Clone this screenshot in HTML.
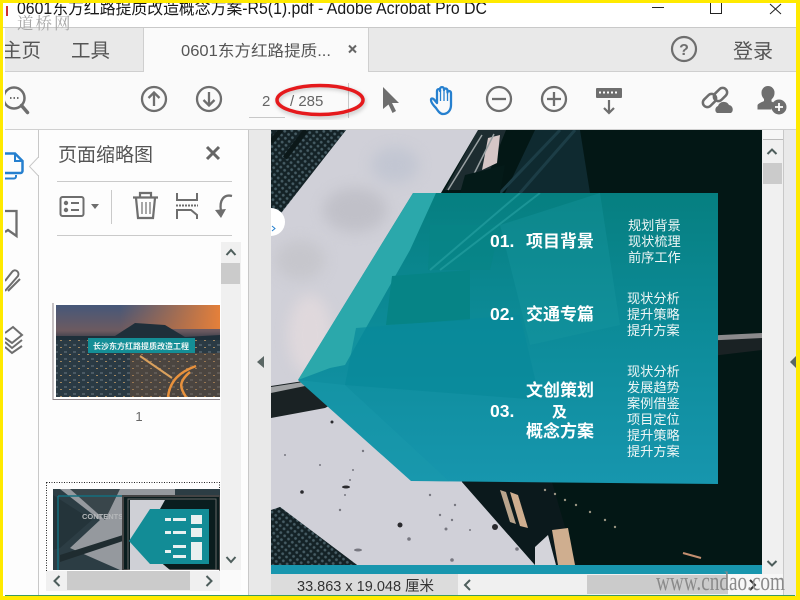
<!DOCTYPE html>
<html><head><meta charset="utf-8"><style>
html,body{margin:0;padding:0;background:#fff;width:800px;height:600px;overflow:hidden}
svg{display:block}
text{font-family:"Liberation Sans","Noto Sans CJK SC",sans-serif}
</style></head><body>
<svg width="800" height="600" viewBox="0 0 800 600" xmlns="http://www.w3.org/2000/svg">
<defs>
<linearGradient id="teal" x1="0" y1="0" x2="0" y2="1"><stop offset="0" stop-color="#067f80"/><stop offset=".5" stop-color="#0d8c9a"/><stop offset="1" stop-color="#1796ae"/></linearGradient>
<linearGradient id="sky" x1="0" y1="0" x2="0" y2="1"><stop offset="0" stop-color="#46587a"/><stop offset=".28" stop-color="#6d5a60"/><stop offset=".4" stop-color="#243240"/><stop offset="1" stop-color="#1b2d3c"/></linearGradient>
<linearGradient id="sun" x1="0" y1="0" x2="1" y2="0"><stop offset="0" stop-color="#d8793f" stop-opacity="0"/><stop offset="1" stop-color="#e5803a"/></linearGradient>
<pattern id="mesh" width="5" height="5" patternUnits="userSpaceOnUse" patternTransform="rotate(40)"><rect width="5" height="5" fill="#142226"/><circle cx="2.500" cy="2.500" r="1.400" fill="#465c64"/></pattern>
<pattern id="city" width="9" height="7" patternUnits="userSpaceOnUse"><rect width="9" height="7" fill="#2a3a44"/><rect x="1" y="1" width="3" height="2" fill="#4b5a64"/><rect x="6" y="4" width="2" height="1" fill="#a08660"/></pattern>
<filter id="b4" color-interpolation-filters="sRGB"><feGaussianBlur stdDeviation="7"/></filter>
<filter id="b2" color-interpolation-filters="sRGB"><feGaussianBlur stdDeviation="2"/></filter>
<clipPath id="doc"><rect x="271" y="130" width="491" height="435"/></clipPath>
<clipPath id="th1"><rect x="56" y="305" width="164" height="92"/></clipPath>
<clipPath id="th2"><rect x="53" y="489" width="167" height="81"/></clipPath>
<clipPath id="tealc"><polygon points="413,193 718,193 718,484 411,481 298,380"/></clipPath>
</defs>

<rect width="800" height="600" fill="#fff"/>
<!-- title bar -->
<rect x="3" y="27" width="793" height="1" fill="#c9c9c9"/>
<rect x="6" y="6" width="2" height="10" fill="#c33"/>
<text x="17" y="14" font-size="17.500" fill="#1a1a1a" textLength="470" lengthAdjust="spacingAndGlyphs">0601东方红路提质改造概念方案-R5(1).pdf - Adobe Acrobat Pro DC</text>
<rect x="652" y="7" width="12" height="1" fill="#222"/>
<path d="M710.500 3V13.500H721.500V3" fill="none" stroke="#222"/>
<path d="M770 4L781 14M781 4L770 14" stroke="#222" fill="none"/>

<!-- tab bar -->
<rect x="3" y="28" width="793" height="44" fill="#e9e9e9"/>
<rect x="143" y="28" width="226" height="44" fill="#fafafa"/>
<path d="M143.500 28V72M368.500 28V72" stroke="#cfcfcf"/>
<rect x="3" y="71" width="140" height="1" fill="#cfcfcf"/><rect x="369" y="71" width="427" height="1" fill="#cfcfcf"/>
<text x="2" y="57" font-size="19.500" fill="#555">主页</text>
<text x="71" y="57" font-size="19.500" fill="#555">工具</text>
<text x="181" y="56" font-size="15.500" fill="#555" textLength="150" lengthAdjust="spacingAndGlyphs">0601东方红路提质...</text>
<path d="M349 45.500L356 52.500M356 45.500L349 52.500" stroke="#666" stroke-width="2"/>
<circle cx="684" cy="49" r="12" fill="none" stroke="#6e6e6e" stroke-width="2.200"/>
<text x="684" y="55" font-size="16" font-weight="bold" fill="#6e6e6e" text-anchor="middle">?</text>
<text x="733" y="58" font-size="20" fill="#555">登录</text>

<!-- toolbar -->
<rect x="3" y="72" width="793" height="57" fill="#fafafa"/>
<rect x="3" y="129" width="793" height="1" fill="#d0d0d0"/>
<circle cx="14" cy="98" r="10.500" fill="none" stroke="#6e6e6e" stroke-width="2.500"/>
<path d="M21.500 105.500L27.500 112.500" stroke="#6e6e6e" stroke-width="3.500" stroke-linecap="round"/>
<path d="M10 98h1.500M13.500 98h1.500M17 98h1.500" stroke="#6e6e6e" stroke-width="2"/>
<g fill="none" stroke="#6e6e6e" stroke-width="2.300">
<circle cx="154" cy="99" r="12"/><path d="M154 106V92.500M148.500 98L154 92.500L159.500 98"/>
<circle cx="209" cy="99" r="12"/><path d="M209 92V105.500M203.500 100L209 105.500L214.500 100"/>
<circle cx="499" cy="99" r="12"/><path d="M492 99H506"/>
<circle cx="554" cy="99" r="12"/><path d="M547 99H561M554 92V106"/>
</g>
<text x="262" y="106" font-size="15" fill="#666">2</text>
<text x="290" y="106" font-size="15" fill="#666">/ 285</text>
<rect x="249" y="117" width="36" height="1" fill="#c8c8c8"/>
<rect x="348" y="83" width="1" height="35" fill="#c8c8c8"/>
<ellipse cx="321" cy="102" rx="43" ry="15" fill="none" stroke="#777" stroke-width="3" opacity=".5" filter="url(#b2)"/>
<ellipse cx="320" cy="100" rx="43" ry="14.500" fill="none" stroke="#e5191c" stroke-width="3.500"/>
<path d="M383 87V109L388.500 104.500L392.500 113L396 111L392 103H399Z" fill="#6e6e6e"/>
<path d="M436 108C433 105 431 102 431 100C431 98 433 98 434.500 100L437 103V91C437 88.500 440 88.500 440 91V89C440 86.500 444 86.500 444 89V90C444 88 447.500 88 447.500 90.500V92.500C447.500 90.500 451 90.500 451 93V105C451 110 448 114 443 114C440 114 438 111 436 108Z" fill="none" stroke="#2680cf" stroke-width="2.300" stroke-linejoin="round"/>
<path d="M440.500 90V101M444 90V101M447.500 91V101" stroke="#2680cf" stroke-width="1.300"/>
<rect x="596" y="88" width="26" height="10" rx="1" fill="#6e6e6e"/>
<path d="M599 92.500h20" stroke="#fff" stroke-width="2" stroke-dasharray="2 2"/>
<path d="M609 100V113M604 108L609 113L614 108" fill="none" stroke="#6e6e6e" stroke-width="2.200"/>
<g fill="none" stroke="#6e6e6e" stroke-width="2.500">
<rect x="702" y="96" width="15" height="9" rx="4.500" transform="rotate(-45 709.500 100.500)"/>
<rect x="713" y="90" width="15" height="9" rx="4.500" transform="rotate(-45 720.500 94.500)"/>
</g>
<path d="M717 113a4 4 0 0 1 1-7a6 6 0 0 1 11-1a4.500 4.500 0 0 1 2 8Z" fill="#6e6e6e"/>
<path d="M768 86a6.500 6.500 0 0 1 6.500 7c0 3-1.500 5-3 6.500v2c1 .5 2 1 3 1.500c-2 2-3 4-3 6.500h-14v-4c0-2 5-3.500 6.500-4.500v-2c-1.500-1.500-2.500-3.500-2.500-6a6.500 6.500 0 0 1 6.500-7Z" fill="#6e6e6e"/>
<circle cx="779" cy="107" r="7.500" fill="#6e6e6e"/>
<path d="M775 107h8M779 103v8" stroke="#fff" stroke-width="1.800"/>

<!-- left rail and panel -->
<rect x="3" y="130" width="35" height="466" fill="#fdfdfd"/>
<rect x="38" y="130" width="1" height="466" fill="#c8c8c8"/>
<rect x="39" y="130" width="209" height="466" fill="#fdfdfd"/>
<rect x="248" y="130" width="1" height="466" fill="#c8c8c8"/>
<rect x="249" y="130" width="22" height="466" fill="#e9e9e9"/>
<path d="M38.500 157L29.500 166.500L38.500 176" fill="#fdfdfd" stroke="#c8c8c8"/>
<rect x="38" y="158" width="2" height="17" fill="#fdfdfd"/>
<path d="M5 153.500H15L22.500 161V171a2 2 0 0 1-2 2H5" fill="none" stroke="#2680cf" stroke-width="2.500"/>
<path d="M15 153.500V161H22.500" fill="none" stroke="#2680cf" stroke-width="2"/>
<path d="M5 178.500H14a2 2 0 0 0 2-2V175" fill="none" stroke="#2680cf" stroke-width="2"/>
<path d="M5 211H16.500V236L8 230L5 232" fill="none" stroke="#6e6e6e" stroke-width="2.300"/>
<path d="M5 291L18 276C20 272 15 268 12 272L5 281M8 291L20 279" fill="none" stroke="#6e6e6e" stroke-width="2"/>
<path d="M5 333L13 327L22 335L12 343L5 338M5 342L12 348L22 340M5 347L12 353L22 346" fill="none" stroke="#6e6e6e" stroke-width="2"/>
<text x="58" y="161" font-size="19" fill="#555">页面缩略图</text>
<path d="M207 147L219 159M219 147L207 159" stroke="#666" stroke-width="3"/>
<rect x="57" y="181" width="175" height="1" fill="#cacaca"/>
<rect x="57" y="235" width="175" height="1" fill="#cacaca"/>
<rect x="111" y="190" width="1" height="34" fill="#cacaca"/>
<rect x="60.500" y="197" width="23" height="19" rx="2" fill="none" stroke="#6e6e6e" stroke-width="2"/>
<circle cx="66" cy="203" r="2.200" fill="#6e6e6e"/><circle cx="66" cy="210" r="2.200" fill="#6e6e6e"/>
<path d="M71 203h8M71 210h8" stroke="#6e6e6e" stroke-width="2"/>
<path d="M91 204H99L95 209Z" fill="#6e6e6e"/>
<path d="M133 197.500H158M140 197V193H151V197M136 198L138 218H153L155 198" fill="none" stroke="#6e6e6e" stroke-width="2.200"/>
<path d="M142 202V214M146 202V214M150 202V214" stroke="#6e6e6e" stroke-width="1.200"/>
<path d="M177 193V200H197V193M177 219V210H191L197 215V219" fill="none" stroke="#6e6e6e" stroke-width="2"/>
<path d="M176 205.500h22" stroke="#6e6e6e" stroke-width="2" stroke-dasharray="2 1"/>
<path d="M232 196C224 194 219 200 221 211" fill="none" stroke="#6e6e6e" stroke-width="2.300"/>
<path d="M215 210L226 209L221 218Z" fill="#6e6e6e"/>

<!-- thumb scrollbars -->
<rect x="221" y="242" width="20" height="328" fill="#f0f0f0"/>
<rect x="221" y="263" width="19" height="21" fill="#cbcbcb"/>
<path d="M226.500 255L231 250L235.500 255" fill="none" stroke="#4e5e5c" stroke-width="2"/>
<path d="M226.500 557L231 562L235.500 557" fill="none" stroke="#4e5e5c" stroke-width="2"/>

<!-- thumb 1 -->
<rect x="53" y="303" width="168" height="97" fill="#fff"/>
<path d="M53 303V399.500H220" fill="none" stroke="#8d8589"/>
<g clip-path="url(#th1)">
<rect x="56" y="305" width="164" height="92" fill="url(#sky)"/>
<rect x="120" y="305" width="100" height="24" fill="url(#sun)"/>
<path d="M56 336L115 336L135 323L165 325L185 337L220 335V397H56Z" fill="#1f2f3a"/>
<rect x="56" y="340" width="164" height="57" fill="url(#city)"/>
<rect x="130" y="353" width="90" height="44" fill="#8a5c3a" opacity=".35"/>
<path d="M196 366C180 372 170 380 168 397M186 397C180 388 178 382 190 372" fill="none" stroke="#e8913c" stroke-width="2.500"/>
<path d="M140 356L172 378" stroke="#d9a05c" stroke-width="2"/>
<rect x="88" y="338" width="107" height="15" fill="#148e96"/>
<text x="93" y="349" font-size="8" font-weight="bold" fill="#eaf4f4">长沙东方红路提质改造工程</text>
</g>
<text x="139" y="421" font-size="13" fill="#666" text-anchor="middle">1</text>

<!-- thumb 2 -->
<rect x="46.500" y="482.500" width="173" height="100" fill="none" stroke="#222" stroke-dasharray="1 1.500"/>
<g clip-path="url(#th2)">
<rect x="53" y="489" width="167" height="81" fill="#2c3d44"/>
<polygon points="60,489 100,520 70,548 120,570 175,570 175,489" fill="#95999e"/>
<polygon points="70,489 120,489 105,520" fill="#39464b"/>
<polygon points="53,495 92,520 60,548 53,550" fill="#24343a"/>
<polygon points="60,555 123,535 123,541 60,562" fill="#1f2c30"/>
<path d="M58 496H220M58 496V570" fill="none" stroke="#146f7e" stroke-width="1.500"/>
<text x="82" y="519" font-size="7.500" font-weight="bold" fill="#b5b8ba">CONTENTS</text>
<rect x="123" y="496" width="97" height="74" fill="#0a1d1e" stroke="#444" stroke-width="2"/>
<rect x="128" y="499" width="88" height="71" fill="none" stroke="#666"/>
<polygon points="130,500 165,500 140,545 170,570 130,570" fill="#cfd0d6"/>
<polygon points="150,509 209,509 209,564 150,564 129,541" fill="#128c96"/>
<g fill="#e8f0f0"><rect x="165" y="518" width="6" height="3"/><rect x="173" y="518" width="13" height="3"/><rect x="191" y="515" width="11" height="9"/><rect x="165" y="531" width="6" height="3"/><rect x="173" y="531" width="13" height="3"/><rect x="191" y="528" width="11" height="9"/><rect x="165" y="550" width="6" height="3"/><rect x="173" y="545" width="13" height="3"/><rect x="173" y="555" width="13" height="3"/><rect x="191" y="542" width="11" height="18"/></g>
</g>
<rect x="46" y="571" width="174" height="20" fill="#f0f0f0"/>
<rect x="67" y="571" width="123" height="19" fill="#cbcbcb"/>
<path d="M59.500 576L54.500 581L59.500 586" fill="none" stroke="#4e5e5c" stroke-width="2"/>
<path d="M206.500 576L211.500 581L206.500 586" fill="none" stroke="#4e5e5c" stroke-width="2"/>
<rect x="220" y="570" width="21" height="21" fill="#fafafa"/>

<!-- document -->
<g clip-path="url(#doc)">
<rect x="271" y="130" width="491" height="435" fill="#031715"/>
<polygon points="535,130 580,130 590,193 505,193" fill="#0f2a30"/>
<path d="M560 130L500 193M575 130L520 193" stroke="#1c3d46" stroke-width="3"/>
<polygon points="478,130 506,130 482,190 445,190" fill="#1d2c30"/>
<polygon points="488,138 500,135 497,163 482,170" fill="#d5c6c6"/>
<path d="M482 135L448 190M494 134L466 190" stroke="#99a0a2" stroke-width="1.500"/>
<polygon points="465,175 505,165 500,193 460,193" fill="#041a18"/>
<!-- concrete -->
<polygon points="346,130 478,130 378,300 462,482 535,565 357,565 280,507 271,512 271,225" fill="#d0d0d8"/>
<g filter="url(#b4)"><ellipse cx="355" cy="210" rx="32" ry="22" fill="#c0c0c8"/><ellipse cx="395" cy="165" rx="24" ry="18" fill="#c2c6d2"/><ellipse cx="310" cy="335" rx="22" ry="40" fill="#dfd8dc"/><ellipse cx="300" cy="260" rx="25" ry="20" fill="#c6c6cc"/></g>
<polygon points="271,130 346,130 271,226" fill="url(#mesh)"/>
<path d="M271 142L281 130M285 158L306 130" stroke="#0c1819" stroke-width="5"/>
<polygon points="271,510 280,507 357,565 271,565" fill="url(#mesh)"/>
<!-- beam -->
<polygon points="271,386 310,380 762,336 762,350 340,400 325,408 271,418" fill="#1a2224"/>
<polygon points="271,387 310,381 310,385 271,393" fill="#a0a2a4"/>
<polygon points="660,338 762,333 762,338 660,343" fill="#8b8a8c"/>
<!-- bottom-right building -->
<polygon points="462,482 552,482 576,565 535,565" fill="#0b191c"/>
<polygon points="500,490 506,492 516,524 510,522" fill="#b9a48c"/>
<polygon points="510,492 518,495 528,528 520,526" fill="#cfae8f"/>
<polygon points="552,530 568,528 575,565 558,565" fill="#cfae8f"/>
<polygon points="535,547 548,535 556,565 535,565" fill="#d4d4da"/>
<g fill="#d8c8b0" opacity=".7"><circle cx="545" cy="490" r="1.200"/><circle cx="555" cy="494" r="1.200"/><circle cx="565" cy="500" r="1.200"/><circle cx="576" cy="505" r="1.200"/><circle cx="590" cy="512" r="1.200"/><circle cx="605" cy="520" r="1.200"/><circle cx="615" cy="527" r="1.200"/></g>
<path d="M683 553L701 558" stroke="#c48f70" stroke-width="2"/>
<!-- specks -->
<g fill="#2a2a2e"><circle cx="400" cy="525" r="2.500"/><circle cx="495" cy="527" r="3"/><ellipse cx="346" cy="487" rx="4" ry="1.500"/><circle cx="302" cy="492" r="1.800"/><circle cx="332" cy="422" r="1.500"/></g>
<g fill="#777780"><circle cx="409" cy="539" r="1.800"/><circle cx="446" cy="529" r="1.500"/><circle cx="517" cy="549" r="1.800"/><circle cx="452" cy="560" r="1.800"/><circle cx="340" cy="510" r="1.200"/><circle cx="363" cy="451" r="1.200"/><circle cx="353" cy="470" r="1"/><circle cx="430" cy="495" r="1.200"/><circle cx="455" cy="505" r="1.200"/><circle cx="440" cy="515" r="1.200"/><circle cx="320" cy="465" r="1"/><circle cx="285" cy="455" r="1"/><ellipse cx="358" cy="550" rx="4" ry="1.500"/><circle cx="350" cy="480" r="1"/><circle cx="345" cy="495" r="1"/><circle cx="452" cy="520" r="1.200"/><circle cx="470" cy="530" r="1"/></g>
<!-- teal panel -->
<polygon points="413,193 718,193 718,484 411,481 298,380" fill="url(#teal)"/>
<g clip-path="url(#tealc)">
<polygon points="413,193 436,193 410,250 345,365 330,368 298,380" fill="#2ba8ab"/>
<polygon points="298,380 410,480 450,482 345,385" fill="#1b9cad" opacity=".4"/>
<polygon points="430,225 500,225 490,270 428,270" fill="#078586" opacity=".7"/>
<polygon points="392,276 470,270 470,320 386,325" fill="#068486"/>
<polygon points="356,328 520,315 540,400 345,385" fill="#09899a" opacity=".7"/>
<path d="M430 270L520 193M440 270L540 193" stroke="#30a9ab" stroke-width="2" opacity=".5"/>
<polygon points="500,225 600,193 620,325 530,345" fill="#1a98a0" opacity=".35"/>
</g>
</g>
<rect x="271" y="565" width="491" height="9" fill="#1896ae"/>
<path d="M271 208a14 14 0 0 1 0 28Z" fill="#fff"/>
<path d="M272 226l3 2.500l-3 2.500" fill="none" stroke="#2680cf"/>

<!-- slide text -->
<g fill="#fff" font-weight="bold">
<text x="490" y="247" font-size="17.500">01.</text>
<text x="526" y="247" font-size="17">项目背景</text>
<text x="490" y="320" font-size="17.500">02.</text>
<text x="526" y="320" font-size="17">交通专篇</text>
<text x="490" y="417" font-size="17.500">03.</text>
<text x="526" y="396" font-size="17">文创策划</text>
<text x="552" y="417" font-size="15">及</text>
<text x="526" y="437" font-size="17">概念方案</text>
</g>
<g fill="#eef6f6" font-size="13.200">
<text x="628" y="230">规划背景</text><text x="628" y="246">现状梳理</text><text x="628" y="262">前序工作</text>
<text x="627" y="303">现状分析</text><text x="627" y="319">提升策略</text><text x="627" y="335">提升方案</text>
<text x="627" y="376">现状分析</text><text x="627" y="392">发展趋势</text><text x="627" y="408">案例借鉴</text><text x="627" y="424">项目定位</text><text x="627" y="440">提升策略</text><text x="627" y="456">提升方案</text>
</g>

<!-- doc scrollbar & gutter -->
<rect x="762" y="130" width="21" height="444" fill="#f0f0f0"/>
<rect x="763" y="130" width="20" height="9" fill="#f6f6f6"/><rect x="763" y="139" width="20" height="1" fill="#bbb"/>
<rect x="763" y="163" width="19" height="21" fill="#cbcbcb"/>
<path d="M767.500 154L772 149.500L776.500 154" fill="none" stroke="#4e5e5c" stroke-width="2"/>
<path d="M767.500 561L772 565.500L776.500 561" fill="none" stroke="#4e5e5c" stroke-width="2"/>
<rect x="783" y="130" width="1" height="466" fill="#c8c8c8"/>
<rect x="784" y="130" width="12" height="466" fill="#e9e9e9"/>
<path d="M264 356V368L257 362Z" fill="#5a6664"/>
<path d="M796 356V368L790 362Z" fill="#5a6664"/>

<!-- status bar -->
<rect x="271" y="574" width="187" height="21" fill="#dcdcdc"/>
<rect x="458" y="574" width="325" height="21" fill="#f0f0f0"/>
<rect x="587" y="575" width="141" height="19" fill="#cbcbcb"/>
<text x="297" y="591" font-size="14.500" fill="#333">33.863 x 19.048 厘米</text>
<path d="M470 580L465 585L470 590" fill="none" stroke="#4e5e5c" stroke-width="2"/>
<rect x="728" y="574" width="55" height="21" fill="#f7f7f7"/>
<path d="M750 580L755 585L750 590" fill="none" stroke="#333" stroke-width="2"/>
<text x="656" y="590" font-size="26" fill="#8a8a8a" style="font-family:'Liberation Serif',serif" textLength="129" lengthAdjust="spacingAndGlyphs">www.cndao.com</text>

<!-- clip strip, bottom lines + yellow frame -->
<rect x="3" y="28" width="2" height="568" fill="#fff"/>
<rect x="5" y="595" width="790" height="1" fill="#3c9a5e"/>
<text x="17" y="29" font-size="16.500" fill="#a8a8a8" style="font-family:'Noto Serif CJK SC',serif" letter-spacing="2">道桥网</text>
<rect x="0" y="0" width="800" height="3" fill="#ffea00"/>
<rect x="0" y="0" width="3" height="600" fill="#ffea00"/>
<rect x="796" y="0" width="4" height="600" fill="#ffea00"/>
<rect x="0" y="596" width="800" height="4" fill="#ffea00"/>
</svg>
</body></html>
